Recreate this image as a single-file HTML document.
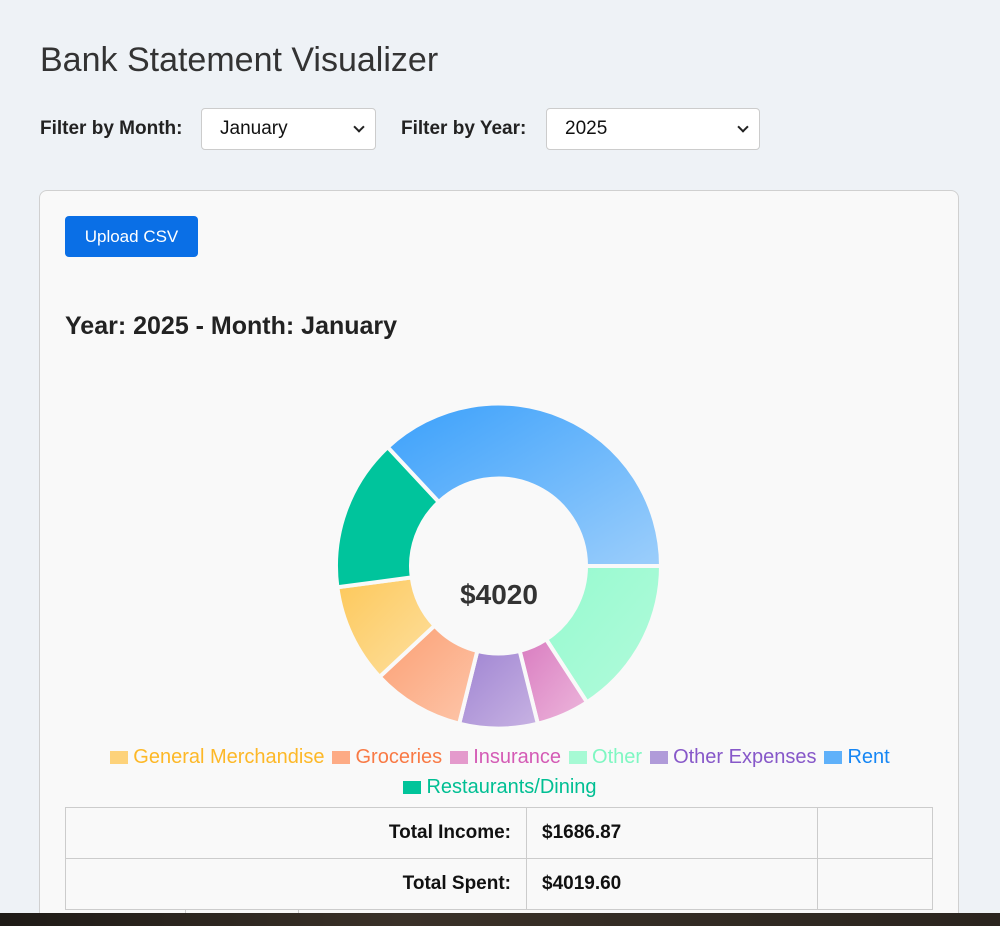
<!DOCTYPE html>
<html style="height:926px;overflow:hidden"><head><style>
body{margin:0;background:#eef2f6;font-family:"Liberation Sans",Arial,sans-serif;width:1000px;height:926px;overflow:hidden;position:relative}
h1{position:absolute;left:40px;top:41px;margin:0;font-size:34px;font-weight:normal;color:#333}
.lbl{position:absolute;top:118px;font-size:19px;font-weight:bold;color:#222}
.sel{position:absolute;top:108px;height:42px;border:1px solid #ccc;border-radius:4px;background:#fff;font-size:19px;box-sizing:border-box;padding:9px 18px;color:#111}
.sel:after{content:"";position:absolute;right:12px;top:14px;width:6px;height:6px;border-right:2px solid #222;border-bottom:2px solid #222;transform:rotate(45deg)}
.card{position:absolute;left:39px;top:190px;width:918px;height:760px;border:1px solid #d0d0d0;border-radius:8px;background:#f9f9f9}
.btn{position:absolute;left:25px;top:25px;width:133px;height:41px;background:#0a6fe6;border-radius:4px;color:#fff;font-size:17px;line-height:41px;text-align:center}
h2{position:absolute;left:25px;top:121px;margin:0;font-size:25px;font-weight:600;color:#222}
.leg{position:absolute;left:0;width:1000px;text-align:center;font-size:20px}
.leg span{margin:0 4px}
.sw{display:inline-block;width:18px;height:13px;margin-right:5px;vertical-align:-1px}
table{position:absolute;left:65px;top:807px;border-collapse:collapse;font-size:19px;font-weight:bold;color:#111}
td{border:1px solid #ccc;height:50px;padding:0 15px}
.bar{position:absolute;left:0;top:913px;width:1000px;height:13px;background:linear-gradient(90deg,#1e1a16,#3a3128 40%,#2a241e)}
</style></head><body>
<h1>Bank Statement Visualizer</h1>
<div class="lbl" style="left:40px">Filter by Month:</div>
<div class="sel" style="left:201px;width:175px">January</div>
<div class="lbl" style="left:401px">Filter by Year:</div>
<div class="sel" style="left:546px;width:214px">2025</div>
<div class="card"><div class="btn">Upload CSV</div><h2>Year: 2025 - Month: January</h2></div>
<svg style="position:absolute;left:0;top:0" width="1000" height="926" id="s">
<defs>
<linearGradient id="gRent" x1="0" y1="0" x2="1" y2="1"><stop offset="0" stop-color="#3aa0fb"/><stop offset="1" stop-color="#9ccefb"/></linearGradient>
<linearGradient id="gOther" x1="0" y1="0" x2="1" y2="1"><stop offset="0" stop-color="#96f9cf"/><stop offset="1" stop-color="#b2fbdb"/></linearGradient>
<linearGradient id="gIns" x1="0" y1="0" x2="1" y2="1"><stop offset="0" stop-color="#d97cc0"/><stop offset="1" stop-color="#edb7dc"/></linearGradient>
<linearGradient id="gOE" x1="0" y1="0" x2="1" y2="1"><stop offset="0" stop-color="#9f84d2"/><stop offset="1" stop-color="#c8b3e3"/></linearGradient>
<linearGradient id="gGro" x1="0" y1="0" x2="1" y2="1"><stop offset="0" stop-color="#fc9f73"/><stop offset="1" stop-color="#fdc6aa"/></linearGradient>
<linearGradient id="gGM" x1="0" y1="0" x2="1" y2="1"><stop offset="0" stop-color="#fdc85a"/><stop offset="1" stop-color="#fde0a0"/></linearGradient>
</defs>
<g id="d"></g>
<text x="499" y="604" text-anchor="middle" font-size="28" font-weight="bold" fill="#333" font-family="Liberation Sans">$4020</text>
</svg>
<div class="leg" style="top:746px">
<span style="color:#fdb827"><i class="sw" style="background:#fdd27a"></i>General Merchandise</span><span style="color:#f97a45"><i class="sw" style="background:#fdab85"></i>Groceries</span><span style="color:#d45bb5"><i class="sw" style="background:#e49acc"></i>Insurance</span><span style="color:#7ff7c2"><i class="sw" style="background:#a6fad4"></i>Other</span><span style="color:#8758c9"><i class="sw" style="background:#b09bd9"></i>Other Expenses</span><span style="color:#1586f4"><i class="sw" style="background:#5fb1fa"></i>Rent</span></div>
<div class="leg" style="top:776px"><span style="color:#00bf93"><i class="sw" style="background:#00c49a"></i>Restaurants/Dining</span></div>
<table>
<tr><td style="width:430px;text-align:right">Total Income:</td><td style="width:260px">$1686.87</td><td style="width:84px"></td></tr>
<tr><td style="text-align:right">Total Spent:</td><td>$4019.60</td><td></td></tr>
</table>
<div style="position:absolute;left:185px;top:909px;width:1px;height:4px;background:#ccc"></div>
<div style="position:absolute;left:298px;top:909px;width:1px;height:4px;background:#ccc"></div>
<div class="bar"></div>
<script>
var cx=498.5,cy=566,R=162.5,r=87.5;
var segs=[[0,57,"url(#gOther)"],[57,76,"url(#gIns)"],[76,104,"url(#gOE)"],[104,137,"url(#gGro)"],[137,172.5,"url(#gGM)"],[172.5,227,"#00c49c"],[227,360,"url(#gRent)"]];
function p(a,rad){a=a*Math.PI/180;return (cx+rad*Math.cos(a)).toFixed(2)+","+(cy+rad*Math.sin(a)).toFixed(2)}
var h="";
segs.forEach(function(s){var l=(s[1]-s[0])>180?1:0;
h+='<path d="M'+p(s[0],R)+' A'+R+','+R+' 0 '+l+' 1 '+p(s[1],R)+' L'+p(s[1],r)+' A'+r+','+r+' 0 '+l+' 0 '+p(s[0],r)+' Z" fill="'+s[2]+'" stroke="#f9f9f9" stroke-width="4"/>';});
document.getElementById("d").innerHTML=h;
</script>
</body></html>
